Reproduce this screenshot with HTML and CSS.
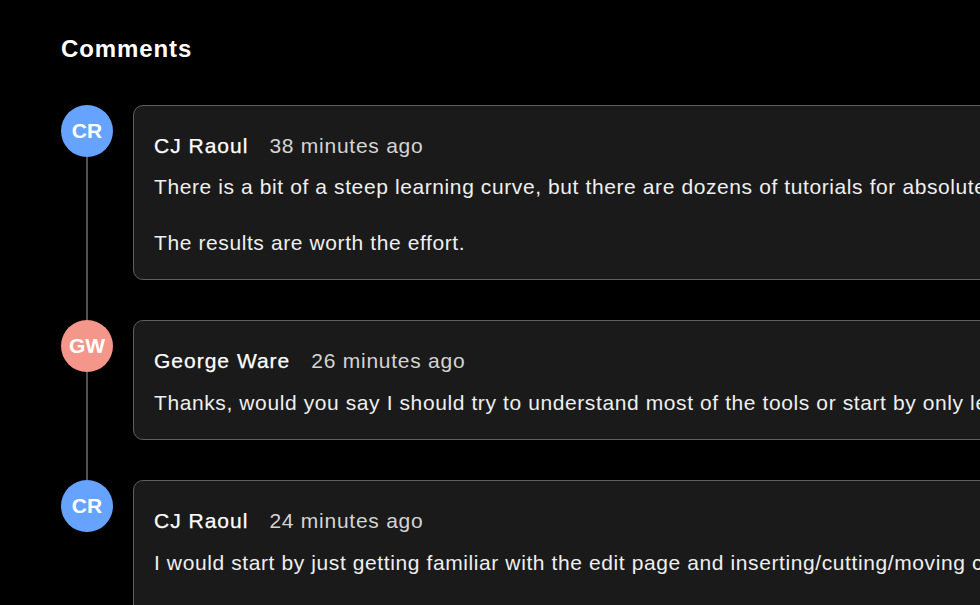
FILE: index.html
```html
<!DOCTYPE html>
<html lang="en">
<head>
<meta charset="utf-8">
<title>Comments</title>
<link rel="stylesheet" href="styles.css">
</head>
<body>
<main class="page">
  <h1 class="title">Comments</h1>
  <ol class="thread">
    <li class="comment">
      <div class="rail">
        <div class="avatar avatar-blue">CR</div>
        <div class="rail-line"></div>
      </div>
      <article class="card">
        <header class="meta"><span class="author">CJ Raoul</span><span class="time">38 minutes ago</span></header>
        <p>There is a bit of a steep learning curve, but there are dozens of tutorials for absolute beginners.</p>
        <p>The results are worth the effort.</p>
      </article>
    </li>
    <li class="comment">
      <div class="rail">
        <div class="avatar avatar-salmon">GW</div>
        <div class="rail-line"></div>
      </div>
      <article class="card">
        <header class="meta"><span class="author">George Ware</span><span class="time">26 minutes ago</span></header>
        <p>Thanks, would you say I should try to understand most of the tools or start by only learning a few?</p>
      </article>
    </li>
    <li class="comment">
      <div class="rail">
        <div class="avatar avatar-blue">CR</div>
      </div>
      <article class="card">
        <header class="meta"><span class="author">CJ Raoul</span><span class="time">24 minutes ago</span></header>
        <p>I would start by just getting familiar with the edit page and inserting/cutting/moving clips on the timeline.</p>
        <p>Once that feels natural, the rest of the tools are much easier to pick up.</p>
      </article>
    </li>
  </ol>
</main>
</body>
</html>
```

FILE: styles.css
```css
html, body {
  margin: 0;
  height: 100%;
  overflow: hidden;
  background: #000;
}

body {
  font-family: "Liberation Sans", Arial, sans-serif;
  color: #efefef;
}

.page {
  width: 1500px;
  padding: 35px 0 0 61px;
}

.title {
  margin: 0 0 41px;
  font-size: 24px;
  line-height: 1.2;
  font-weight: 700;
  letter-spacing: 0.9px;
  color: #fff;
}

.thread {
  list-style: none;
  margin: 0;
  padding: 0;
}

.comment {
  display: flex;
  gap: 20px;
}

.rail {
  flex: 0 0 52px;
  display: flex;
  flex-direction: column;
  align-items: center;
}

.avatar {
  width: 52px;
  height: 52px;
  flex: 0 0 52px;
  border-radius: 50%;
  display: flex;
  align-items: center;
  justify-content: center;
  font-size: 21px;
  font-weight: 700;
  color: #fff;
}

.avatar-blue {
  background: #66a3ff;
}

.avatar-salmon {
  background: #f4968a;
}

.rail-line {
  flex: 1;
  width: 2px;
  background: #505050;
}

.card {
  flex: 1;
  margin-bottom: 40px;
  padding: 24px 20px 21px;
  background: #1a1a1a;
  border: 1px solid #5e5e5e;
  border-radius: 10px;
  font-size: 21px;
  line-height: 31.5px;
  letter-spacing: 0.6px;
}

.meta {
  display: flex;
  gap: 21px;
  margin-bottom: 10px;
}

.author {
  color: #fff;
  letter-spacing: 1px;
  -webkit-text-stroke: 0.25px #fff;
}

.time {
  color: #d4d4d4;
  letter-spacing: 0.75px;
}

.card p {
  margin: 0;
}

.card p + p {
  margin-top: 24px;
}
```
